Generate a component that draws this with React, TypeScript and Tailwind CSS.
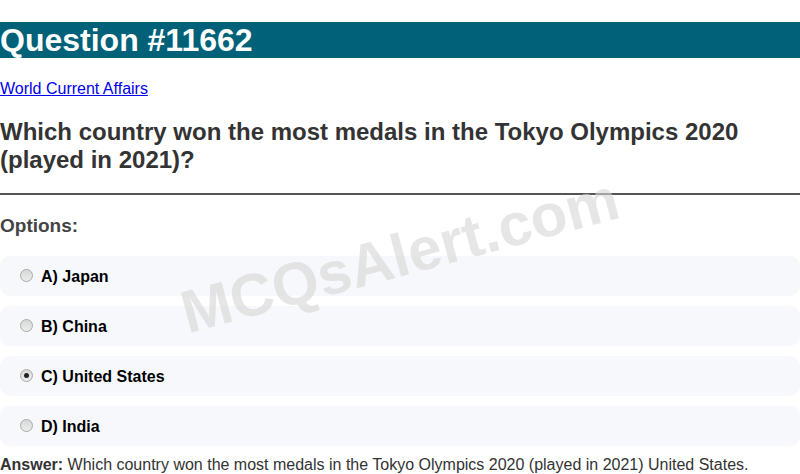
const OPTIONS = [
  { id: "a", label: "A) Japan", checked: false },
  { id: "b", label: "B) China", checked: false },
  { id: "c", label: "C) United States", checked: true },
  { id: "d", label: "D) India", checked: false },
]

function Radio({ checked }: { checked: boolean }) {
  return (
    <span className="mr-[8px] -mt-[4px] flex h-[13px] w-[13px] shrink-0 items-center justify-center rounded-full border border-[#a9a9a9] bg-gradient-to-b from-[#d8d8d8] to-[#ececec]">
      {checked && <span className="h-[5px] w-[5px] rounded-full bg-[#222]" />}
    </span>
  )
}

export default function App() {
  return (
    <div className="relative w-[800px] h-[474px] overflow-hidden bg-white font-['Liberation_Sans',Arial,sans-serif]">
      {/* Header */}
      <h1 className="mt-[22px] h-[36px] bg-[#006179] text-white text-[32px] font-bold leading-[36px]">
        Question #11662
      </h1>

      <a href="#" className="block mt-[22px] text-[16px] leading-[18px] text-[#0000ee] underline">
        World Current Affairs
      </a>

      <h2 className="mt-[20px] text-[24px] font-bold leading-[28px] text-[#333333]">
        Which country won the most medals in the Tokyo Olympics 2020 (played in 2021)?
      </h2>

      <hr className="mt-[19px] border-0 h-[2px] bg-[#555555]" />

      <h3 className="mt-[20px] text-[19px] font-bold leading-[22px] text-[#444444]">Options:</h3>

      <div className="mt-[19px] flex flex-col gap-[10px]">
        {OPTIONS.map((o) => (
          <label
            key={o.id}
            className="flex items-center h-[40px] rounded-[10px] bg-[#f7f8fb] pl-[20px] pt-[2px] text-[16px] font-bold text-black"
          >
            <Radio checked={o.checked} />
            {o.label}
          </label>
        ))}
      </div>

      <p className="mt-[10px] text-[16px] leading-[18px] text-[#333333]">
        <span className="font-bold">Answer:</span> Which country won the most medals in the Tokyo Olympics 2020 (played in 2021) United States.
      </p>

      {/* Watermark */}
      <div className="pointer-events-none absolute left-[400px] top-[256px] -translate-x-1/2 -translate-y-1/2 -rotate-[15deg] whitespace-nowrap text-[60px] font-bold text-[#d6d6d6]/60 leading-none">
        MCQsAlert.com
      </div>
    </div>
  )
}
